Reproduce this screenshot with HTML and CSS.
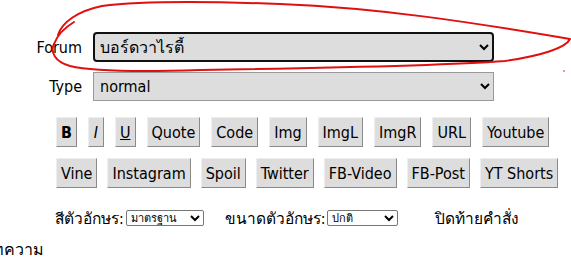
FILE: index.html
```html
<!DOCTYPE html>
<html lang="th">
<head>
  <meta charset="UTF-8">
  <title>ตั้งกระทู้</title>
  <link rel="stylesheet" href="styles.css">
</head>
<body>
  <div class="page">
    <div class="fields">
      <label class="field-label">Forum</label>
      <select class="field-select focused">
        <option>บอร์ดวาไรตี้</option>
      </select>
      <label class="field-label">Type</label>
      <select class="field-select">
        <option>normal</option>
      </select>
    </div>

    <div class="toolbar">
      <div class="tool-row wide">
        <button class="tool"><b>B</b></button>
        <button class="tool tool-i"><i>I</i></button>
        <button class="tool"><u>U</u></button>
        <button class="tool">Quote</button>
        <button class="tool">Code</button>
        <button class="tool">Img</button>
        <button class="tool">ImgL</button>
        <button class="tool">ImgR</button>
        <button class="tool">URL</button>
        <button class="tool">Youtube</button>
      </div>
      <div class="tool-row">
        <button class="tool">Vine</button>
        <button class="tool">Instagram</button>
        <button class="tool">Spoil</button>
        <button class="tool">Twitter</button>
        <button class="tool">FB-Video</button>
        <button class="tool">FB-Post</button>
        <button class="tool">YT Shorts</button>
      </div>
    </div>

    <div class="options">
      <span class="opt-label">สีตัวอักษร:</span>
      <select class="small-select color-select">
        <option>มาตรฐาน</option>
      </select>
      <span class="opt-label size-label">ขนาดตัวอักษร:</span>
      <select class="small-select size-select">
        <option>ปกติ</option>
      </select>
      <span class="opt-label close-label">ปิดท้ายคำสั่ง</span>
    </div>

    <div class="body-label">บทความ</div>

    <!-- red marker circle drawn over the Forum field -->
    <svg class="marker" width="571" height="261" viewBox="0 0 571 261">
      <path d="M58 35 C62 22 78 11 102 6 C140 1 200 1 280 4 C380 8 470 22 570 39 C566 48 540 56 505 61 C440 66 330 68 200 70 C140 72 95 72 70 66 C55 62 50 52 54 44 C57 36 64 28 74 22" fill="none" stroke="#e01010" stroke-width="2" stroke-linecap="round" stroke-linejoin="round"/>
      <circle cx="564" cy="71" r="0.8" fill="#e01010"/>
    </svg>
  </div>
</body>
</html>
```

FILE: styles.css
```css
body {
  margin: 0;
  font-family: "DejaVu Sans Condensed", "DejaVu Sans", "Noto Sans", sans-serif;
  font-size: 16px;
  color: #000;
  background-color: #fff;
}
.page {
  position: relative;
  width: 571px;
  height: 261px;
  overflow: hidden;
}
.fields {
  display: grid;
  grid-template-columns: 82px 401px;
  column-gap: 11px;
  row-gap: 10px;
  padding-top: 32px;
  align-items: center;
}
.field-label {
  text-align: right;
  font-size: 16px;
}
.field-select {
  height: 29px;
  font-family: inherit;
  font-size: 16px;
  background-color: #ddd;
  border: 1px solid #999;
  border-radius: 0;
  padding: 0 2px;
  color: #000;
}
.field-select.focused {
  height: 30px;
  border: 2px solid #111;
  border-radius: 4px;
  padding: 0 1px;
}
.toolbar {
  padding-left: 56px;
  margin-top: 16px;
}
.tool-row {
  display: flex;
  gap: 10px;
  margin-bottom: 11px;
}
.tool-row.wide {
  gap: 11px;
}
.tool {
  flex-shrink: 0;
  white-space: nowrap;
  height: 30px;
  padding: 0 4px;
  font-family: inherit;
  font-size: 16px;
  color: #000;
  background-color: #ddd;
  border: 1px solid;
  border-color: #eee #8a8a8a #8a8a8a #eee;
  border-radius: 0;
}
.tool-i {
  min-width: 16px;
}
.options {
  display: flex;
  align-items: center;
  padding-left: 55px;
  margin-top: 20px;
  height: 20px;
  white-space: nowrap;
}
.opt-label {
  font-size: 15.5px;
}
.small-select {
  height: 16px;
  font-size: 11px;
  font-family: inherit;
  padding: 0;
  margin-left: 2px;
  border: 1px solid #767676;
  border-radius: 2px;
  background-color: #fff;
}
.color-select {
  width: 78px;
}
.size-select {
  width: 71px;
}
.size-label {
  margin-left: 21px;
}
.close-label {
  margin-left: 37px;
}
.body-label {
  margin-top: 9px;
  margin-left: -17px;
  font-size: 16px;
}
.marker {
  position: absolute;
  top: 0;
  left: 0;
  pointer-events: none;
}
```
